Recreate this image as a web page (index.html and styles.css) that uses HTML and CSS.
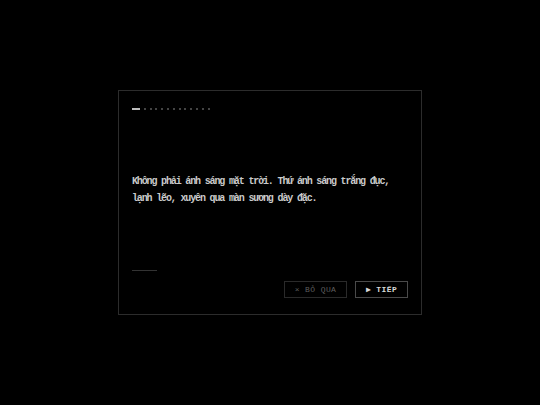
FILE: index.html
```html
<!DOCTYPE html>
<html lang="vi">
<head>
<meta charset="utf-8">
<title>Cảnh mở đầu</title>
<link rel="stylesheet" href="styles.css">
</head>
<body>
  <main class="panel">
    <div class="progress">
      <span class="step active"></span>
      <span class="step"></span>
      <span class="step"></span>
      <span class="step"></span>
      <span class="step"></span>
      <span class="step"></span>
      <span class="step"></span>
      <span class="step"></span>
      <span class="step"></span>
      <span class="step"></span>
      <span class="step"></span>
      <span class="step"></span>
      <span class="step"></span>
    </div>
    <div class="story">
      <p class="line">Không phải ánh sáng mặt trời. Thứ ánh sáng trắng đục, lạnh lẽo, xuyên qua màn sương dày đặc.</p>
    </div>
    <div class="rule"></div>
    <div class="actions">
      <button class="btn skip">× BỎ QUA</button>
      <button class="btn next">▶ TIẾP</button>
    </div>
  </main>
</body>
</html>
```
FILE: styles.css
```css
html, body {
  margin: 0;
  height: 100%;
  background: #000;
}

body {
  display: flex;
  align-items: center;
  justify-content: center;
  font-family: "Liberation Mono", "DejaVu Sans Mono", monospace;
}

.panel {
  box-sizing: border-box;
  width: 304px;
  height: 225px;
  margin-top: -1px;
  border: 1px solid #2c2c2c;
  padding: 17px 13px 16px 13px;
  display: flex;
  flex-direction: column;
}

/* slide indicator */
.progress {
  display: flex;
  align-items: center;
  gap: 3.8px;
  height: 2px;
}

.step {
  width: 2px;
  height: 2px;
  background: #444;
}

.step.active {
  width: 8px;
  background: #bdbdbd;
}

/* narration */
.story {
  flex: 1;
  display: flex;
  align-items: center;
}

.line {
  margin: 0;
  padding-top: 2px;
  font-size: 10px;
  font-weight: bold;
  letter-spacing: -1.15px;
  line-height: 16.5px;
  color: #cacaca;
}

.rule {
  width: 25px;
  height: 1px;
  background: #333;
  margin-bottom: 10px;
}

/* controls */
.actions {
  display: flex;
  justify-content: flex-end;
  gap: 8px;
}

.btn {
  box-sizing: border-box;
  height: 17px;
  padding: 0;
  background: transparent;
  font-family: "Liberation Mono", "DejaVu Sans Mono", monospace;
  font-size: 8px;
  letter-spacing: 0.4px;
  cursor: pointer;
}

.skip {
  width: 63px;
  border: 1px solid #2a2a2a;
  color: #5e5e5e;
}

.next {
  width: 53px;
  border: 1px solid #4a4a4a;
  color: #d8d8d8;
  font-weight: bold;
}
```
